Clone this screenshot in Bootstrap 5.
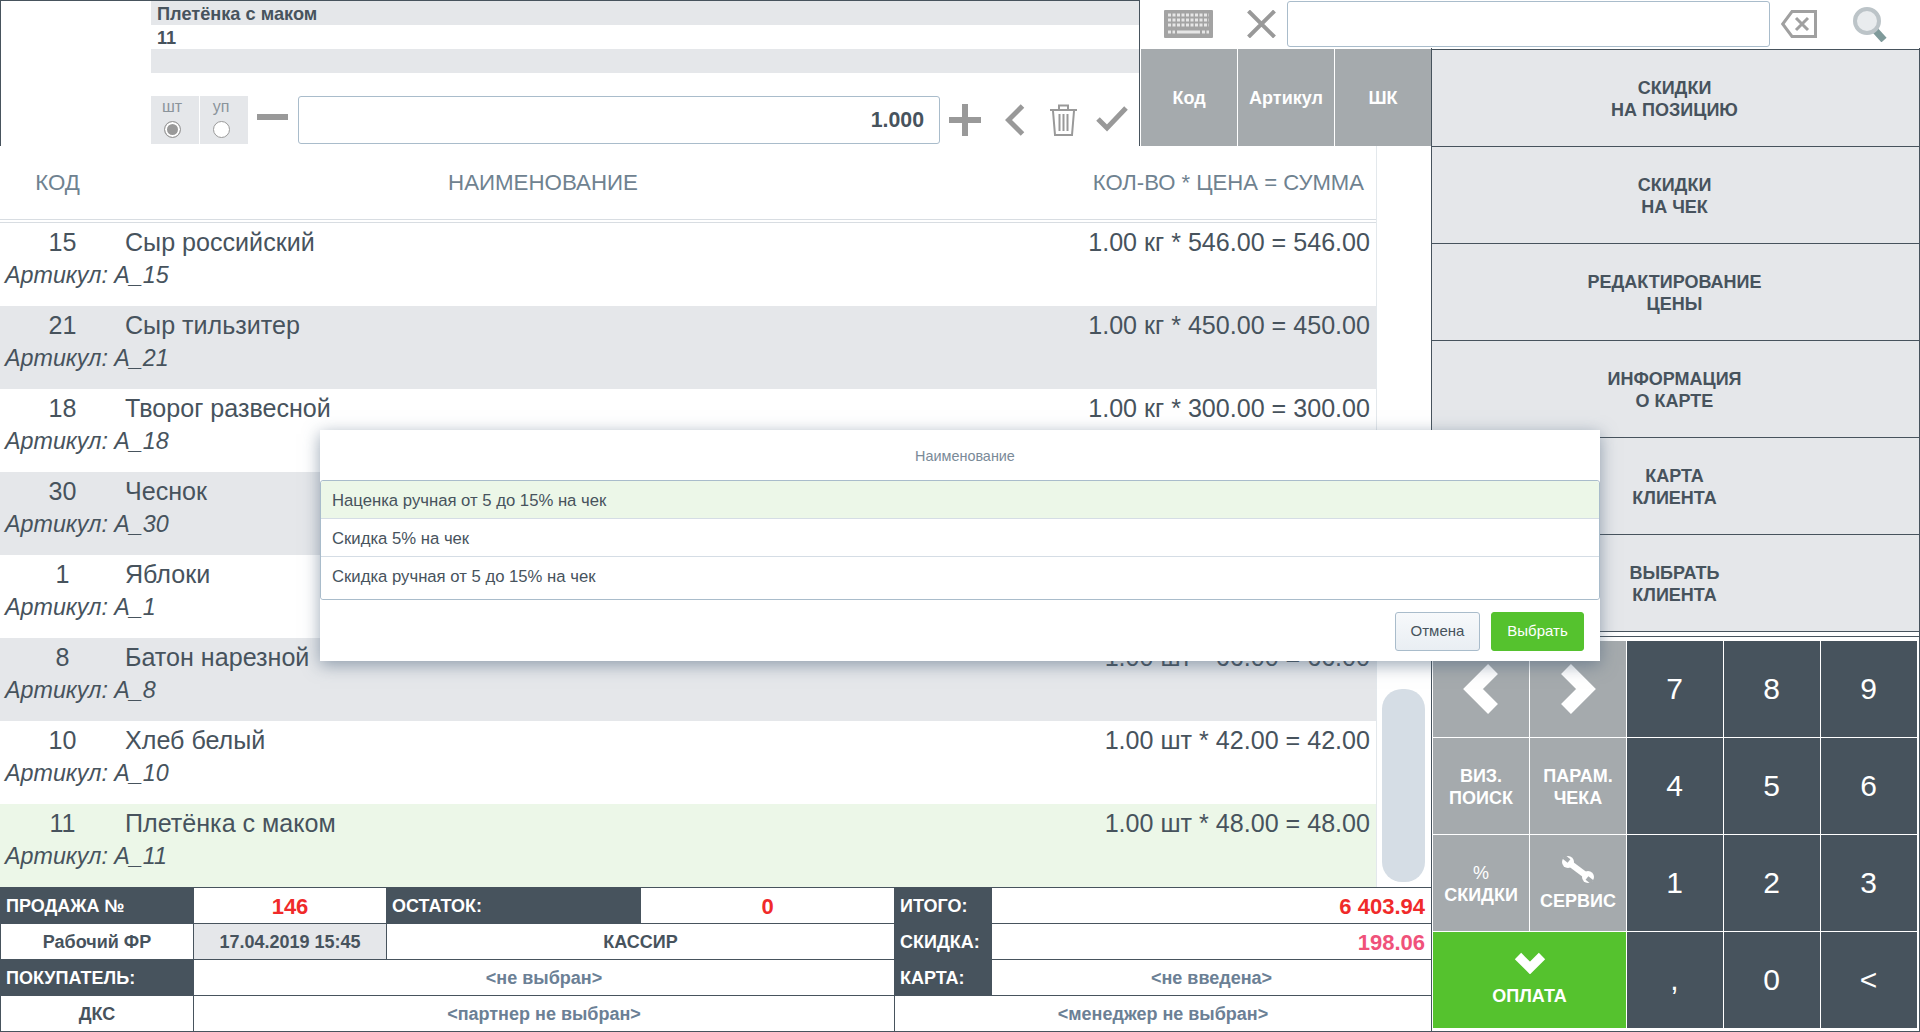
<!DOCTYPE html>
<html lang="ru">
<head>
  <meta charset="UTF-8" />
  <meta name="viewport" content="width=device-width, initial-scale=1" />
  <title>Касса</title>
  <link href="https://cdn.jsdelivr.net/npm/bootstrap@5.3.0/dist/css/bootstrap.min.css" rel="stylesheet" />
  <style>
    html, body { height: 100%; }
    body {
      margin: 0;
      overflow: hidden;
      background: #fff;
      color: #47535d;
      font-family: "Liberation Sans", Arial, sans-serif;
    }
    .pos-root {
      display: grid;
      grid-template-columns: 1140px 291px 489px;
      grid-template-rows: 48px 98px 741px 145px;
      width: 1920px;
      height: 1032px;
    }

    /* верхняя панель товара */
    .prod-panel {
      grid-column: 1; grid-row: 1 / 3;
      border: 1px solid #47535d;
      border-bottom: 0;
      padding-left: 150px;
    }
    .prod-line { height: 24px; line-height: 27px; padding-left: 6px; font-size: 18.2px; font-weight: 700; }
    .prod-line.shade { background: #e5e7ea; }
    .qty-row { margin-top: 23px; height: 48px; }
    .unit-box {
      width: 48px; height: 48px; margin-right: 1px;
      background: #e5e7ea; color: #8b949b;
      font-size: 16px; line-height: 18px; padding: 2px 6px 0 0;
    }
    .unit-radio {
      appearance: none; display: block;
      width: 17px; height: 17px; margin: 5px auto 0;
      border: 1px solid #9a9a9a; border-radius: 50%; background: #fff;
    }
    .unit-radio:checked { background: #999; box-shadow: inset 0 0 0 2px #fff; }
    .qty-input, .qty-input:focus {
      width: 642px; height: 48px;
      border: 1px solid #a9bccb; border-radius: 3px;
      padding: 0 15px; text-align: right;
      font-size: 21.3px; font-weight: 700; color: #47535d;
      box-shadow: none;
    }
    .ic-minus { margin: 0 10px 0 8px; }
    .ic-plus { margin: 0 24px 0 9px; }
    .ic-back { margin-right: 24px; }
    .ic-trash { margin-right: 18px; }

    /* поиск */
    .search-bar { grid-column: 2 / 4; grid-row: 1; height: 48px; }
    .ic-close { margin: 0 11px 0 34px; }
    .ic-erase { margin-left: 11px; }
    .ic-find { margin-left: 36px; }
    .find-input, .find-input:focus {
      width: 483px; height: 46px;
      border: 1px solid #a9bccb; border-radius: 3px;
      box-shadow: none;
    }
    .tab-row { grid-column: 2; grid-row: 2; padding: 1px 0 0 1px; gap: 1px; height: 98px; }
    .tab-cell { flex: 1; background: #a5aaad; color: #fff; font-size: 18px; font-weight: 700; padding-top: 2px; }

    /* список позиций */
    .list-zone { grid-column: 1 / 3; grid-row: 3; min-height: 0; }
    .list-main { width: 1376px; }
    .list-head {
      height: 77px;
      border-bottom: 4px double #d8dde2;
      color: #6f8290; font-size: 22.3px;
      padding-top: 20px;
    }
    .head-code { width: 115px; text-align: center; }
    .head-name { width: 856px; text-align: center; }
    .head-sum { width: 393px; text-align: right; font-size: 22.1px; }
    .pos-row { height: 83px; padding-top: 3px; font-size: 25.1px; line-height: 33px; overflow: hidden; }
    .pos-row.shade { background: #e5e7ea; }
    .pos-row.picked { background: #ecf7e8; }
    .pos-code { width: 125px; text-align: center; }
    .pos-name { flex: 1; }
    .pos-sum { padding-right: 6px; }
    .pos-art { padding-left: 5px; font-style: italic; font-size: 23.3px; }
    .scroll-col { width: 55px; border-left: 1px solid #e3e8ec; padding: 0 6px 5px 5px; }
    .scroll-thumb { height: 193px; background: #d5dde5; border-radius: 20px; }

    /* итоги */
    .sale-wrap { grid-column: 1 / 3; grid-row: 4; }
    .sale-tbl {
      width: 1431px; table-layout: fixed; border-collapse: collapse;
      font-size: 18px; font-weight: 700;
    }
    .sale-tbl td { height: 36px; padding: 1px 5px 0; border: 1px solid #47535d; white-space: nowrap; text-align: center; }
    .sale-tbl td.lbl { background: #47535d; color: #fff; text-align: left; }
    .sale-tbl td.gr { background: #e5e7ea; }
    .sale-tbl td.mute { color: #6b8095; }
    .sale-tbl td.num { color: #f02a2a; font-size: 22px; }
    .sale-tbl td.end { text-align: right; padding-right: 6px; }
    .sale-tbl td.pink { color: #f0527a; }

    /* правая колонка */
    .side-col {
      grid-column: 3; grid-row: 2 / 5;
      border-left: 1px solid #47535d;
      border-right: 1px solid #47535d;
      border-bottom: 1px solid #47535d;
      padding-top: 1px;
    }
    .side-btn {
      height: 97px;
      background: #e5e7ea; color: #47535d;
      border-bottom: 1px solid #47535d;
      font-size: 18px; font-weight: 700; line-height: 22px; text-align: center;
      padding: 2px 2px 0 0;
    }
    .side-btn:first-child { border-top: 1px solid #47535d; height: 98px; }
    .pad-grid {
      margin-top: 4px; padding: 4px 2px 2px 1px;
      border-top: 1px solid #47535d;
      display: grid;
      grid-template-columns: repeat(5, 96px);
      grid-auto-rows: 96px;
      gap: 1px;
    }
    .pad-key { background: #47535d; color: #fff; font-size: 30px; padding: 0 1px 2px 0; }
    .pad-tool { background: #a5aaad; color: #fff; font-size: 18px; font-weight: 700; line-height: 22px; text-align: center; padding-top: 2px; }
    .pad-pay { grid-column: span 2; background: #55c22e; color: #fff; font-size: 18px; font-weight: 700; padding-top: 1px; }
    .nav-arrow { margin-bottom: 3px; }
    .pay-arrow { margin-bottom: 9px; }
    .tool-wrench { margin-bottom: 6px; }
    .pct-sign { font-weight: 400; }

    /* диалог */
    .pick-dlg {
      position: absolute; left: 320px; top: 430px;
      width: 1280px; height: 231px;
      background: #fff;
      border: 0; border-radius: 0;
      box-shadow: 0 4px 16px rgba(71, 95, 120, .55);
    }
    .pick-title { height: 50px; color: #7a8a98; font-size: 14.4px; padding: 3px 0 0 10px; }
    .pick-list { border: 1px solid #a9bccb; border-radius: 3px; }
    .pick-item {
      height: 38px; padding: 3px 11px 0; font-size: 16.7px; color: #47535d;
      border-color: #d5dde5;
    }
    .pick-item.on { background: #ecf7e8; }
    .pick-list .pick-item:last-child { height: 42px; padding-bottom: 5px; }
    .pick-foot { padding: 12px 16px 0 0; gap: 11px; }
    .btn-cancel, .btn-ok { height: 39px; padding: 0; font-size: 15px; border-radius: 3px; }
    .btn-cancel { width: 85px; color: #47535d; border: 1px solid #a9bccb; background: linear-gradient(#f7f9fb, #e9eef3); }
    .btn-ok { width: 93px; color: #fff; border: 1px solid #55c22e; background: #55c22e; }
  </style>
</head>
<body>
  <div class="pos-root position-relative">

    <div class="prod-panel">
      <div class="prod-line shade">Плетёнка с маком</div>
      <div class="prod-line">11</div>
      <div class="prod-line shade"></div>
      <div class="qty-row d-flex align-items-start">
        <label class="unit-box text-center">шт<input class="unit-radio" type="radio" name="unit" checked /></label>
        <label class="unit-box text-center">уп<input class="unit-radio" type="radio" name="unit" /></label>
        <svg class="ic-minus mt-3" width="31" height="9" viewBox="0 0 31 9"><rect y="2" width="31" height="6" fill="#999"/></svg>
        <input class="form-control qty-input" type="text" value="1.000" />
        <svg class="ic-plus mt-2" width="32" height="32" viewBox="0 0 32 32"><path d="M13 0h6v13h13v6H19v13h-6V19H0v-6h13z" fill="#999"/></svg>
        <svg class="ic-back mt-2" width="20" height="32" viewBox="0 0 20 32"><path d="M17.500 2 3.500 16l14 14" fill="none" stroke="#999" stroke-width="5"/></svg>
        <svg class="ic-trash mt-2" width="29" height="32" viewBox="0 0 29 32" fill="none" stroke="#999" stroke-width="2"><path d="M1 6h27M10 5V1.500h9V5M4 7l2 24h17l2-24M10.500 10v17M14.500 10v17M18.500 10v17"/></svg>
        <svg class="mt-2" width="32" height="28" viewBox="0 0 32 28"><path d="M2 15l9 9L30 4" fill="none" stroke="#999" stroke-width="5"/></svg>
      </div>
    </div>

    <div class="search-bar d-flex align-items-center">
      <svg class="ms-4" width="49" height="28" viewBox="0 0 49 28">
        <rect width="49" height="28" rx="1" fill="#a3a3a3"/>
        <path d="M4 5h41M4 10h41M4 15h41" stroke="#e6e6e6" stroke-width="3" stroke-dasharray="3 1.500"/>
        <path d="M4 22h7M38 22h7" stroke="#e6e6e6" stroke-width="3" stroke-dasharray="3 1.500"/>
        <path d="M13 22h23" stroke="#e6e6e6" stroke-width="3"/>
      </svg>
      <svg class="ic-close" width="29" height="28" viewBox="0 0 29 28"><path d="M1.500 1 27.500 27M27.500 1 1.500 27" stroke="#999" stroke-width="4"/></svg>
      <input class="form-control find-input" type="text" />
      <svg class="ic-erase" width="36" height="28" viewBox="0 0 36 28" fill="none" stroke="#a0a0a0" stroke-width="3"><path d="M11 1.500h23.500v25H11L1.700 14z"/><path d="M15 8l12 12M27 8 15 20"/></svg>
      <svg class="ic-find" width="35" height="35" viewBox="0 0 35 35"><path d="M21 22l10 11" stroke="#7f9a9a" stroke-width="7"/><circle cx="14" cy="14" r="12" fill="#e9ecee" stroke="#bcc4c8" stroke-width="4"/></svg>
    </div>

    <div class="tab-row d-flex">
      <div class="tab-cell d-flex align-items-center justify-content-center">Код</div>
      <div class="tab-cell d-flex align-items-center justify-content-center">Артикул</div>
      <div class="tab-cell d-flex align-items-center justify-content-center">ШК</div>
    </div>

    <div class="list-zone d-flex">
      <div class="list-main">
        <div class="list-head d-flex">
          <div class="head-code">КОД</div>
          <div class="head-name">НАИМЕНОВАНИЕ</div>
          <div class="head-sum">КОЛ-ВО * ЦЕНА = СУММА</div>
        </div>
        <div id="pos-list"></div>
      </div>
      <div class="scroll-col d-flex flex-column justify-content-end">
        <div class="scroll-thumb"></div>
      </div>
    </div>

    <div class="sale-wrap">
      <table class="sale-tbl">
        <colgroup><col style="width:193px"><col style="width:193px"><col style="width:254px"><col style="width:254px"><col style="width:97px"><col style="width:440px"></colgroup>
        <tr>
          <td class="lbl">ПРОДАЖА №</td><td class="num">146</td><td class="lbl">ОСТАТОК:</td><td class="num">0</td>
          <td class="lbl">ИТОГО:</td><td class="num end">6 403.94</td>
        </tr>
        <tr>
          <td>Рабочий ФР</td><td class="gr">17.04.2019 15:45</td><td colspan="2">КАССИР</td>
          <td class="lbl">СКИДКА:</td><td class="num end pink">198.06</td>
        </tr>
        <tr>
          <td class="lbl">ПОКУПАТЕЛЬ:</td><td class="mute" colspan="3">&lt;не выбран&gt;</td>
          <td class="lbl">КАРТА:</td><td class="mute">&lt;не введена&gt;</td>
        </tr>
        <tr>
          <td>ДКС</td><td class="mute" colspan="3">&lt;партнер не выбран&gt;</td>
          <td class="mute" colspan="2">&lt;менеджер не выбран&gt;</td>
        </tr>
      </table>
    </div>

    <div class="side-col">
      <div class="side-btn d-flex align-items-center justify-content-center">СКИДКИ<br />НА ПОЗИЦИЮ</div>
      <div class="side-btn d-flex align-items-center justify-content-center">СКИДКИ<br />НА ЧЕК</div>
      <div class="side-btn d-flex align-items-center justify-content-center">РЕДАКТИРОВАНИЕ<br />ЦЕНЫ</div>
      <div class="side-btn d-flex align-items-center justify-content-center">ИНФОРМАЦИЯ<br />О КАРТЕ</div>
      <div class="side-btn d-flex align-items-center justify-content-center">КАРТА<br />КЛИЕНТА</div>
      <div class="side-btn d-flex align-items-center justify-content-center">ВЫБРАТЬ<br />КЛИЕНТА</div>
      <div class="pad-grid">
        <div class="pad-tool d-flex align-items-center justify-content-center">
          <svg class="nav-arrow" width="36" height="50" viewBox="0 0 36 50"><path d="M30 5 10 25l20 20" fill="none" stroke="#fff" stroke-width="14"/></svg>
        </div>
        <div class="pad-tool d-flex align-items-center justify-content-center">
          <svg class="nav-arrow" width="36" height="50" viewBox="0 0 36 50"><path d="M6 5l20 20L6 45" fill="none" stroke="#fff" stroke-width="14"/></svg>
        </div>
        <div class="pad-key d-flex align-items-center justify-content-center">7</div>
        <div class="pad-key d-flex align-items-center justify-content-center">8</div>
        <div class="pad-key d-flex align-items-center justify-content-center">9</div>
        <div class="pad-tool d-flex align-items-center justify-content-center">ВИЗ.<br />ПОИСК</div>
        <div class="pad-tool d-flex align-items-center justify-content-center">ПАРАМ.<br />ЧЕКА</div>
        <div class="pad-key d-flex align-items-center justify-content-center">4</div>
        <div class="pad-key d-flex align-items-center justify-content-center">5</div>
        <div class="pad-key d-flex align-items-center justify-content-center">6</div>
        <div class="pad-tool d-flex flex-column align-items-center justify-content-center"><span class="pct-sign">%</span>СКИДКИ</div>
        <div class="pad-tool d-flex flex-column align-items-center justify-content-center">
          <svg class="tool-wrench" width="34" height="28" viewBox="0 0 34 28">
            <path d="M7 6l20 15" stroke="#fff" stroke-width="6"/>
            <circle cx="7" cy="6" r="6" fill="#fff"/>
            <circle cx="27" cy="21" r="6" fill="#fff"/>
            <path d="M3 1l5 4M31 26l-5-4" stroke="#a5aaad" stroke-width="4.500"/>
          </svg>
          СЕРВИС
        </div>
        <div class="pad-key d-flex align-items-center justify-content-center">1</div>
        <div class="pad-key d-flex align-items-center justify-content-center">2</div>
        <div class="pad-key d-flex align-items-center justify-content-center">3</div>
        <div class="pad-pay d-flex flex-column align-items-center justify-content-center">
          <svg class="pay-arrow" width="32" height="22" viewBox="0 0 32 22"><path d="M4 4l12 12L28 4" fill="none" stroke="#fff" stroke-width="9"/></svg>
          ОПЛАТА
        </div>
        <div class="pad-key d-flex align-items-center justify-content-center">,</div>
        <div class="pad-key d-flex align-items-center justify-content-center">0</div>
        <div class="pad-key d-flex align-items-center justify-content-center">&lt;</div>
      </div>
    </div>

    <div class="modal-content pick-dlg">
      <div class="pick-title d-flex align-items-center justify-content-center">Наименование</div>
      <div class="list-group list-group-flush pick-list">
        <div class="list-group-item pick-item on d-flex align-items-center">Наценка ручная от 5 до 15% на чек</div>
        <div class="list-group-item pick-item d-flex align-items-center">Скидка 5% на чек</div>
        <div class="list-group-item pick-item d-flex align-items-center">Скидка ручная от 5 до 15% на чек</div>
      </div>
      <div class="pick-foot d-flex justify-content-end">
        <button class="btn btn-cancel" type="button">Отмена</button>
        <button class="btn btn-ok" type="button">Выбрать</button>
      </div>
    </div>
  </div>

  <script src="https://cdn.jsdelivr.net/npm/bootstrap@5.3.0/dist/js/bootstrap.bundle.min.js"></script>
  <script>
    const positions = [
      { code: 15, name: 'Сыр российский', sum: '1.00 кг * 546.00 = 546.00' },
      { code: 21, name: 'Сыр тильзитер', sum: '1.00 кг * 450.00 = 450.00' },
      { code: 18, name: 'Творог развесной', sum: '1.00 кг * 300.00 = 300.00' },
      { code: 30, name: 'Чеснок', sum: '' },
      { code: 1, name: 'Яблоки', sum: '' },
      { code: 8, name: 'Батон нарезной', sum: '1.00 шт * 66.00 = 66.00' },
      { code: 10, name: 'Хлеб белый', sum: '1.00 шт * 42.00 = 42.00' },
      { code: 11, name: 'Плетёнка с маком', sum: '1.00 шт * 48.00 = 48.00' }
    ];

    const list = document.getElementById('pos-list');
    positions.forEach((p, i) => {
      const row = document.createElement('div');
      row.className = 'pos-row';
      if (i === positions.length - 1) row.classList.add('picked');
      else if (i % 2 === 1) row.classList.add('shade');
      row.innerHTML = `
        <div class="d-flex">
          <div class="pos-code">${p.code}</div>
          <div class="pos-name">${p.name}</div>
          <div class="pos-sum">${p.sum}</div>
        </div>
        <div class="pos-art">Артикул: A_${p.code}</div>`;
      list.appendChild(row);
    });
  </script>
</body>
</html>
